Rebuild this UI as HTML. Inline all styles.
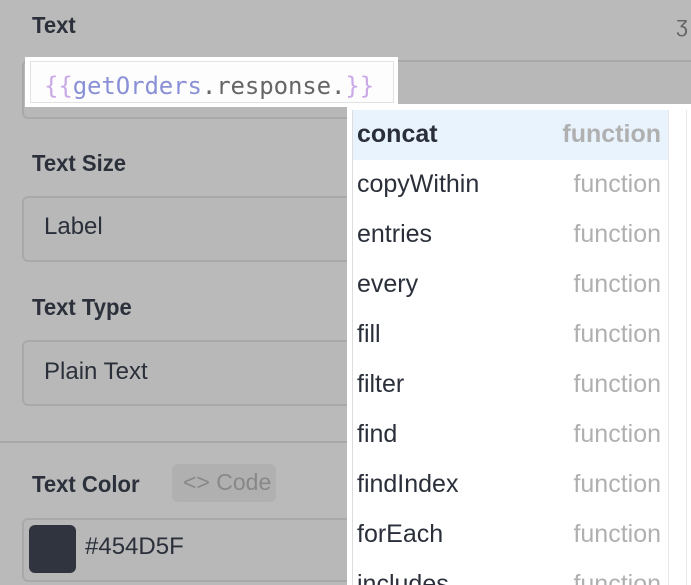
<!DOCTYPE html>
<html><head><style>
body{margin:0;width:691px;height:585px;background:#bababa;font-family:"Liberation Sans",sans-serif;overflow:hidden;position:relative;color:#2a2f3a}
.a{position:absolute}
.lbl{font-size:23px;font-weight:bold;color:#2b303b;transform:scaleX(.96);transform-origin:left}
.box{border:2px solid #a9a9a9;border-radius:6px;background:#b8b8b8}
.row{position:absolute;left:0;width:316px;height:50px;font-size:25px;line-height:48px}
.row span{position:absolute;left:4px}
.row i{position:absolute;right:8px;font-style:normal;color:#b0b0b0}
</style></head><body>
<div class="a lbl" style="left:32px;top:12px">Text</div>
<div class="a" style="left:676px;top:12px;font-size:22px;color:#666">&#x0292;</div>
<div class="a box" style="left:22px;top:60px;width:680px;height:55px"></div>
<div class="a" style="left:25px;top:57px;width:369px;height:46px;background:#fff;border:2px solid #fff"></div>
<div class="a" style="left:30px;top:61px;width:362px;height:40px;background:#fdfdfd;border:1px solid #e2e2e2"></div>
<div class="a" style="left:44px;top:72px;font-family:'DejaVu Sans Mono','Liberation Mono',monospace;font-size:24px;letter-spacing:-0.1px"><span style="color:#c9a9e6">{{</span><span style="color:#8a90d6">getOrders</span><span style="color:#666">.response.</span><span style="color:#c9a9e6">}}</span></div>
<div class="a lbl" style="left:32px;top:150px">Text Size</div>
<div class="a box" style="left:22px;top:196px;width:680px;height:62px"></div>
<div class="a" style="left:44px;top:213px;font-size:24px">Label</div>
<div class="a lbl" style="left:32px;top:294px">Text Type</div>
<div class="a box" style="left:22px;top:340px;width:680px;height:62px"></div>
<div class="a" style="left:44px;top:358px;font-size:24px">Plain Text</div>
<div class="a" style="left:0;top:441px;width:691px;height:2px;background:#a8a8a8"></div>
<div class="a lbl" style="left:32px;top:471px">Text Color</div>
<div class="a" style="left:172px;top:464px;width:104px;height:38px;background:#b0b0b0;border-radius:6px"></div>
<div class="a" style="left:183px;top:469px;font-size:23px;color:#888">&lt;&gt; Code</div>
<div class="a box" style="left:22px;top:518px;width:680px;height:60px"></div>
<div class="a" style="left:29px;top:525px;width:47px;height:48px;background:#30343f;border-radius:6px"></div>
<div class="a" style="left:85px;top:533px;font-size:24px">#454D5F</div>
<div class="a" style="left:347px;top:104px;width:344px;height:481px;background:#fff"></div>
<div class="a" style="left:352px;top:110px;width:316px;height:475px;overflow:hidden;border-left:1px solid #ddd">
<div class="row" style="top:0;background:#e8f3fd"><span style="font-weight:bold">concat</span><i style="font-weight:bold">function</i></div>
<div class="row" style="top:50px"><span>copyWithin</span><i>function</i></div>
<div class="row" style="top:100px"><span>entries</span><i>function</i></div>
<div class="row" style="top:150px"><span>every</span><i>function</i></div>
<div class="row" style="top:200px"><span>fill</span><i>function</i></div>
<div class="row" style="top:250px"><span>filter</span><i>function</i></div>
<div class="row" style="top:300px"><span>find</span><i>function</i></div>
<div class="row" style="top:350px"><span>findIndex</span><i>function</i></div>
<div class="row" style="top:400px"><span>forEach</span><i>function</i></div>
<div class="row" style="top:450px"><span>includes</span><i>function</i></div>
</div>
<div class="a" style="left:668px;top:110px;width:1px;height:475px;background:#e6e6e6"></div>
<div class="a" style="left:686px;top:110px;width:1px;height:475px;background:#e6e6e6"></div>
</body></html>
